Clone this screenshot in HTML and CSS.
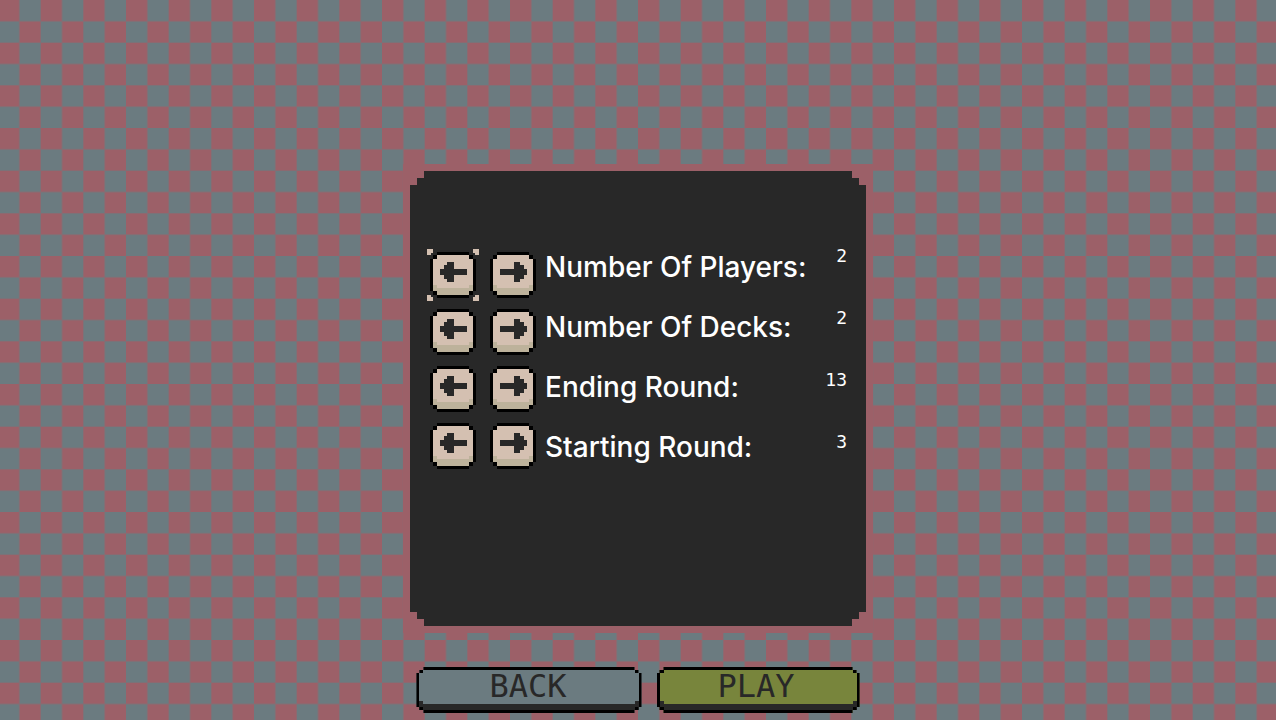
FILE: index.html
```html
<!DOCTYPE html>
<html lang="en">
<head>
    <meta charset="UTF-8">
    <meta name="viewport" content="width=device-width, initial-scale=1.0">
    <title>Game Setup</title>
    <link rel="stylesheet" href="styles.css">
</head>
<body>
    <svg width="0" height="0" class="sprites" aria-hidden="true">
        <symbol id="key" viewBox="0 0 14 14" shape-rendering="crispEdges">
            <path fill="#000" d="M2 0h10v1h1v1h1v10h-1v1h-1v1H2v-1H1v-1H0V2h1V1h1z"/>
            <path fill="#d4c0b1" d="M2 1h10v1h1v10h-1v1H2v-1H1V2h1z"/>
            <path fill="#bdb29b" d="M1 10h1v1h10v-1h1v2h-1v1H2v-1H1z"/>
        </symbol>
        <symbol id="arrow" viewBox="0 0 8 6" shape-rendering="crispEdges">
            <path fill="#282828" d="M2 0h2v2h4v2H4v2H2V5H1V4H0V2h1V1h1z"/>
        </symbol>
    </svg>

    <svg class="checker" viewBox="0 0 60 33.75" preserveAspectRatio="xMidYMin slice" aria-hidden="true">
        <pattern id="tiles" width="2" height="2" patternUnits="userSpaceOnUse">
            <rect width="2" height="2" fill="#6b7b80"/>
            <path fill="#9c6068" d="M0 0h1v1H0zM1 1h1v1H1z"/>
        </pattern>
        <rect x="-60" width="180" height="120" fill="url(#tiles)"/>
    </svg>

    <main class="screen">
        <form class="setup" id="setup">
            <div class="panel">
                <div class="arrows">
                    <button type="button" class="key focused" aria-label="Fewer players"><svg class="cap"><use href="#key"/></svg><svg class="arrow"><use href="#arrow"/></svg></button>
                    <button type="button" class="key" aria-label="More players"><svg class="cap"><use href="#key"/></svg><svg class="arrow right"><use href="#arrow"/></svg></button>
                    <button type="button" class="key" aria-label="Fewer decks"><svg class="cap"><use href="#key"/></svg><svg class="arrow"><use href="#arrow"/></svg></button>
                    <button type="button" class="key" aria-label="More decks"><svg class="cap"><use href="#key"/></svg><svg class="arrow right"><use href="#arrow"/></svg></button>
                    <button type="button" class="key" aria-label="Earlier ending round"><svg class="cap"><use href="#key"/></svg><svg class="arrow"><use href="#arrow"/></svg></button>
                    <button type="button" class="key" aria-label="Later ending round"><svg class="cap"><use href="#key"/></svg><svg class="arrow right"><use href="#arrow"/></svg></button>
                    <button type="button" class="key" aria-label="Earlier starting round"><svg class="cap"><use href="#key"/></svg><svg class="arrow"><use href="#arrow"/></svg></button>
                    <button type="button" class="key" aria-label="Later starting round"><svg class="cap"><use href="#key"/></svg><svg class="arrow right"><use href="#arrow"/></svg></button>
                </div>
                <div class="labels">
                    <label for="players">Number Of Players:</label>
                    <label for="decks">Number Of Decks:</label>
                    <label for="ending">Ending Round:</label>
                    <label for="starting">Starting Round:</label>
                </div>
                <div class="values">
                    <output id="players">2</output>
                    <output id="decks">2</output>
                    <output id="ending">13</output>
                    <output id="starting">3</output>
                </div>
            </div>
        </form>
        <div class="actions">
            <button type="button" class="action back">BACK</button>
            <button type="submit" form="setup" class="action play">PLAY</button>
        </div>
    </main>
</body>
</html>
```

FILE: styles.css
```css
* { box-sizing: border-box; }

body {
    margin: 0;
    font-family: "DejaVu Sans Mono", monospace;
    color: #fff;
    background: #6b7b80;
}

button {
    padding: 0;
    border: none;
    background: none;
    font: inherit;
    cursor: pointer;
}

.sprites { position: absolute; }

.checker {
    position: fixed;
    inset: 0;
    width: 100%;
    height: 100%;
    z-index: -1;
}

.screen {
    min-height: 100vh;
    display: flex;
    flex-direction: column;
    align-items: center;
    justify-content: flex-end;
    gap: 34px;
    padding-bottom: 7px;
}

.setup {
    padding: 7px;
    background: #9c6068;
}

.panel {
    display: grid;
    grid-template-columns: auto 1fr auto;
    gap: 9px;
    align-items: start;
    width: 456px;
    max-width: 100%;
    padding: 76px 19px 131px 20px;
    background: #282828;
    /* stepped pixel corners */
    clip-path: polygon(
        14px 0, calc(100% - 14px) 0, calc(100% - 14px) 7px, calc(100% - 7px) 7px, calc(100% - 7px) 14px, 100% 14px,
        100% calc(100% - 14px), calc(100% - 7px) calc(100% - 14px), calc(100% - 7px) calc(100% - 7px), calc(100% - 14px) calc(100% - 7px), calc(100% - 14px) 100%,
        14px 100%, 14px calc(100% - 7px), 7px calc(100% - 7px), 7px calc(100% - 14px), 0 calc(100% - 14px),
        0 14px, 7px 14px, 7px 7px, 14px 7px);
}

.arrows {
    display: grid;
    grid-template-columns: 46px 46px;
    gap: 11px 14px;
    padding-top: 5px;
}

.key {
    position: relative;
    display: grid;
    place-items: center;
    height: 46px;
}

.cap, .arrow { grid-area: 1 / 1; }

.cap {
    width: 46px;
    height: 46px;
}

.arrow {
    width: 27px;
    height: 20px;
    margin-bottom: 6px;
}

.right { transform: scaleX(-1); }

/* selection brackets: two small bars in each corner */
.key.focused::after {
    --bar: linear-gradient(#d4c0b1, #d4c0b1);
    content: "";
    position: absolute;
    inset: -3px;
    background:
        var(--bar) 0 0 / 6px 4px, var(--bar) 0 0 / 4px 6px,
        var(--bar) 100% 0 / 6px 4px, var(--bar) 100% 0 / 4px 6px,
        var(--bar) 0 100% / 6px 4px, var(--bar) 0 100% / 4px 6px,
        var(--bar) 100% 100% / 6px 4px, var(--bar) 100% 100% / 4px 6px;
    background-repeat: no-repeat;
}

.labels {
    display: grid;
    grid-auto-rows: 60px;
    font-family: Inter, sans-serif;
    font-size: 28px;
    font-weight: 500;
    line-height: 40px;
    white-space: nowrap;
}

.values {
    display: grid;
    grid-auto-rows: 62px;
    font-size: 18px;
    line-height: 18px;
    text-align: right;
}

.actions {
    display: flex;
    gap: 15px;
}

.action {
    --black: linear-gradient(#000, #000);
    --shade: linear-gradient(#282828, #282828);
    height: 46px;
    border: 3px solid #000;
    padding-bottom: 8px;
    font-size: 32px;
    line-height: 32px;
    color: #282828;
    background:
        var(--black) 0 0 / 4px 3px,
        var(--black) 100% 0 / 4px 3px,
        var(--black) 0 100% / 4px 3px,
        var(--black) 100% 100% / 4px 3px,
        var(--shade) 0 100% / 100% 6px,
        var(--shade) 0 100% / 4px 9px,
        var(--shade) 100% 100% / 4px 9px;
    background-repeat: no-repeat;
    clip-path: polygon(
        7px 0, calc(100% - 7px) 0, calc(100% - 7px) 3px, calc(100% - 3px) 3px, calc(100% - 3px) 6px, 100% 6px,
        100% calc(100% - 6px), calc(100% - 3px) calc(100% - 6px), calc(100% - 3px) calc(100% - 3px), calc(100% - 7px) calc(100% - 3px), calc(100% - 7px) 100%,
        7px 100%, 7px calc(100% - 3px), 3px calc(100% - 3px), 3px calc(100% - 6px), 0 calc(100% - 6px),
        0 6px, 3px 6px, 3px 3px, 7px 3px);
}

.back {
    padding-inline: 70px 72px;
    background-color: #6b7b80;
}

.play {
    padding-inline: 58px 62px;
    background-color: #78853c;
}
```
